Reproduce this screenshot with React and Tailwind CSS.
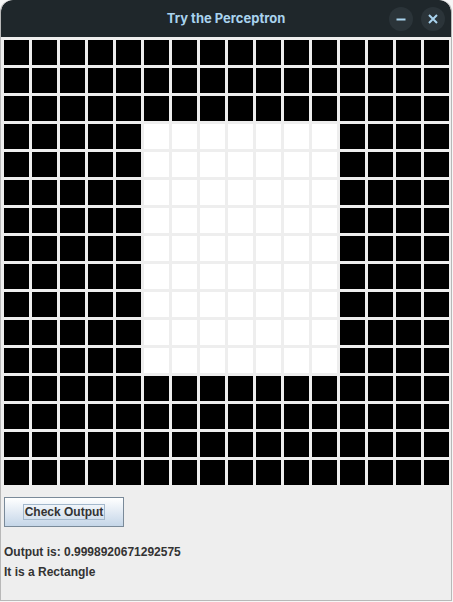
import React from 'react';

const SIZE = 16;

function isWhite(r, c) {
  return r >= 3 && r <= 11 && c >= 5 && c <= 11;
}

function TitleBar() {
  return (
    <div className="relative flex h-[37px] items-center justify-center rounded-t-[12px] bg-[#1f272b]">
      <span className="text-[13px] font-bold text-[#a9d3ee]" style={{ fontFamily: 'Inter, "Noto Sans", sans-serif' }}>
        Try the Perceptron
      </span>
      <div className="absolute right-[6px] top-[7px] flex gap-[8px]">
        <button className="flex h-[24px] w-[24px] items-center justify-center rounded-full bg-[#2b3439]">
          <svg width="10" height="10" viewBox="0 0 10 10">
            <path d="M0.5 5.5h9" stroke="#a9d3ee" strokeWidth="2" />
          </svg>
        </button>
        <button className="flex h-[24px] w-[24px] items-center justify-center rounded-full bg-[#2b3439]">
          <svg width="10" height="10" viewBox="0 0 10 10">
            <path d="M1 1l8 8M9 1l-8 8" stroke="#a9d3ee" strokeWidth="2" />
          </svg>
        </button>
      </div>
    </div>
  );
}

function PixelGrid() {
  const rows = [];
  for (let r = 0; r < SIZE; r++) {
    for (let c = 0; c < SIZE; c++) {
      rows.push(
        <div
          key={`${r}-${c}`}
          className={`h-[25px] w-[25px] ${isWhite(r, c) ? 'bg-white' : 'bg-black'}`}
        />
      );
    }
  }
  return <div className="grid grid-cols-[repeat(16,25px)] gap-[3px]">{rows}</div>;
}

export default function App() {
  return (
    <div className="h-[602px] w-[453px] bg-[#f6f6f6]" style={{ fontFamily: '"Liberation Sans", Arial, sans-serif' }}>
      <div className="flex h-[601px] w-[452px] flex-col overflow-hidden rounded-t-[12px] border-r border-b border-l border-[#b8b8b8] bg-[#eeeeee]">
        <TitleBar />
        <div className="pl-[3px] pt-[3px]">
          <PixelGrid />
        </div>
        <div className="pl-[3px] pt-[12px]">
          <button className="flex h-[30px] w-[120px] items-center justify-center border border-[#7a8a99] bg-gradient-to-b from-white to-[#c5d6e8]">
            <span className="border border-[#a3b8cc] px-[1px] text-[12px] font-bold leading-[14px] text-[#333333]">
              Check Output
            </span>
          </button>
        </div>
        <div className="pl-[3px] pt-[15px] text-[12px] font-bold leading-[20px] text-[#333333]">
          <div>Output is: 0.9998920671292575</div>
          <div>It is a Rectangle</div>
        </div>
      </div>
    </div>
  );
}
